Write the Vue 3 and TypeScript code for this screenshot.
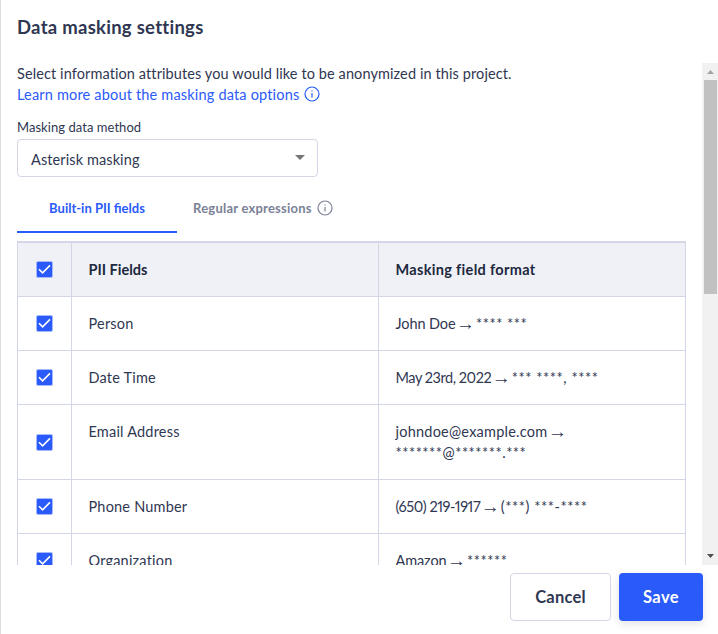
<script setup lang="ts">
import { ref } from 'vue'

interface FormatLine {
  source?: string
  mask?: string
  kind?: 'numeric' | 'email'
}

interface PiiField {
  name: string
  lines: FormatLine[]
  checked: boolean
}

const fields = ref<PiiField[]>([
  { name: 'Person', lines: [{ source: 'John Doe', mask: '**** ***' }], checked: true },
  {
    name: 'Date Time',
    lines: [{ source: 'May 23rd, 2022', mask: '*** ****, ****', kind: 'numeric' }],
    checked: true,
  },
  {
    name: 'Email Address',
    lines: [{ source: 'johndoe@example.com', kind: 'email' }, { mask: '*******@*******.***', kind: 'email' }],
    checked: true,
  },
  {
    name: 'Phone Number',
    lines: [{ source: '(650) 219-1917', mask: '(***) ***-****', kind: 'numeric' }],
    checked: true,
  },
  { name: 'Organization', lines: [{ source: 'Amazon', mask: '******' }], checked: true },
])
</script>

<template>
  <div class="dialog">
    <h1 class="title"><span>Data masking settings</span></h1>
    <div class="scroller">
      <div class="content">
        <p class="intro">Select information attributes you would like to be anonymized in this project.</p>
        <a class="learn">
          <span>Learn more about the masking data options</span>
          <svg class="info" viewBox="0 0 16 16">
            <circle cx="8" cy="8" r="7" />
            <path d="M8 7v4.5M8 4.4v1.2" />
          </svg>
        </a>
        <label class="label">Masking data method</label>
        <div class="select">
          <span>Asterisk masking</span>
          <svg class="caret" viewBox="0 0 10 5"><path d="M0 0h10L5 5z" /></svg>
        </div>
        <div class="tabs">
          <div class="tab active"><span>Built-in PII fields</span></div>
          <div class="tab second">
            <span>Regular expressions</span>
            <svg class="info" viewBox="0 0 16 16">
              <circle cx="8" cy="8" r="7" />
              <path d="M8 7v4.5M8 4.4v1.2" />
            </svg>
          </div>
        </div>
        <div class="table">
          <div class="row head">
            <div class="cell check">
              <svg class="box" viewBox="0 0 17 17">
                <rect class="edge" width="17" height="17" rx="2" />
                <rect x="1" y="1" width="15" height="15" rx="1" />
                <path d="M3 8.2l3.6 3.6 7.4-7.4" />
              </svg>
            </div>
            <div class="cell"><span class="name-title">PII Fields</span></div>
            <div class="cell"><span class="format-title">Masking field format</span></div>
          </div>
          <div v-for="field in fields" :key="field.name" class="row">
            <div class="cell check" @click="field.checked = !field.checked">
              <svg class="box" viewBox="0 0 17 17">
                <rect class="edge" width="17" height="17" rx="2" />
                <rect x="1" y="1" width="15" height="15" rx="1" />
                <path v-if="field.checked" d="M3 8.2l3.6 3.6 7.4-7.4" />
              </svg>
            </div>
            <div class="cell"><span>{{ field.name }}</span></div>
            <div class="cell">
              <div v-for="(line, i) in field.lines" :key="i" class="line" :class="line.kind">
                <template v-if="line.source">
                  <span class="source">{{ line.source }}</span>
                  <span class="arrow">→</span>
                </template>
                <span v-if="line.mask" class="mask">{{ line.mask }}</span>
              </div>
            </div>
          </div>
        </div>
      </div>
      <div class="scrollbar">
        <svg class="up" viewBox="0 0 7 4"><path d="M0 4h7L3.5 0z" /></svg>
        <div class="thumb"></div>
        <svg class="down" viewBox="0 0 7 4"><path d="M0 0h7L3.5 4z" /></svg>
      </div>
    </div>
    <div class="actions">
      <button class="cancel"><span>Cancel</span></button>
      <button class="save"><span>Save</span></button>
    </div>
  </div>
</template>

<style>
body {
  background: #fff;
  overflow: hidden;
}
</style>

<style scoped>
* {
  box-sizing: border-box;
}
.dialog {
  height: 634px;
  border-left: 1px solid #dcdcdc;
  display: flex;
  flex-direction: column;
  font: 400 14.5px/21px Lato, 'Open Sans', sans-serif;
  letter-spacing: 0.2px;
  color: #2f3752;
}
.title {
  margin: 0;
  height: 63px;
  padding: 15px 0 0 16px;
  font-size: 18.5px;
  line-height: 24px;
  font-weight: 700;
  letter-spacing: 0.27px;
}
.scroller {
  height: 502px;
  display: flex;
  overflow: hidden;
}
.content {
  width: 701px;
  flex: none;
  padding-left: 16px;
}
.intro {
  margin: 0;
  letter-spacing: 0.1px;
}
.learn {
  display: flex;
  align-items: center;
  gap: 5px;
  color: #2a5afa;
  letter-spacing: 0.18px;
}
.info {
  width: 16px;
  height: 16px;
  fill: none;
  stroke: currentColor;
  stroke-width: 1.2;
}
.learn .info {
  margin-bottom: 2px;
}
.label {
  display: block;
  margin-top: 13px;
  font-size: 13px;
  line-height: 18px;
  letter-spacing: 0.05px;
}
.select {
  margin-top: 3px;
  width: 301px;
  height: 38px;
  border: 1px solid #d2d6e6;
  border-radius: 4px;
  display: flex;
  align-items: center;
  justify-content: space-between;
  padding: 2px 12px 0 13px;
  letter-spacing: 0.1px;
}
.caret {
  width: 10px;
  height: 5px;
  margin-bottom: 4px;
  fill: #757575;
}
.tabs {
  display: flex;
  height: 56px;
  font-size: 13px;
  font-weight: 700;
  letter-spacing: 0;
  color: #7b8197;
}
.tab {
  display: flex;
  align-items: center;
  gap: 5px;
  height: 100%;
  padding: 9px 16px 0;
}
.tab.second {
  padding-bottom: 2px;
  letter-spacing: 0.22px;
}
.tab.second .info {
  margin-bottom: 1px;
}
.tab.active {
  width: 160px;
  justify-content: center;
  color: #2a5afa;
  border-bottom: 2px solid #2a5afa;
}
.table {
  margin-top: 8px;
  width: 669px;
  border: 1px solid #d2d6e6;
  border-top-width: 2px;
  border-bottom: 0;
}
.row {
  display: grid;
  grid-template-columns: 53px 307px 307px;
  border-bottom: 1px solid #d2d6e6;
}
.head {
  background: #f0f1f6;
  font-weight: 700;
  color: #20283e;
}
.name-title {
  letter-spacing: 0;
}
.format-title {
  letter-spacing: 0.32px;
}
.cell {
  padding: 16px 16px 16px 16.5px;
}
.cell + .cell {
  border-left: 1px solid #d2d6e6;
}
.cell.check {
  padding: 0;
  display: flex;
  align-items: center;
  justify-content: center;
}
.box {
  width: 17px;
  height: 17px;
}
.box rect {
  fill: #2a5afa;
}
.box .edge {
  fill: #a5b8fb;
}
.box path {
  fill: none;
  stroke: #fff;
  stroke-width: 1.6;
}
.line {
  height: 21px;
  display: flex;
  white-space: pre;
}
.source {
  font-variant-numeric: proportional-nums;
  letter-spacing: -0.1px;
}
.numeric .source {
  letter-spacing: -0.45px;
}
.email .source {
  letter-spacing: 0.23px;
}
.arrow {
  font-family: 'Liberation Sans', sans-serif;
  font-size: 19px;
  letter-spacing: 0;
  margin: 0 1px 0 0.5px;
}
.mask {
  letter-spacing: 0.55px;
}
.numeric .mask {
  letter-spacing: 0.6px;
}
.scrollbar {
  width: 16px;
  flex: none;
  background: #f1f1f1;
  display: flex;
  flex-direction: column;
  align-items: center;
}
.up,
.down {
  width: 7px;
  height: 4px;
  margin-top: 7px;
  fill: #a3a3a3;
}
.down {
  margin: auto 0 7px;
  fill: #505050;
}
.thumb {
  margin-top: 6px;
  width: 13px;
  height: 214px;
  background: #c1c1c1;
}
.actions {
  display: flex;
  justify-content: flex-end;
  gap: 8px;
  padding: 8px 15px 0 0;
}
button {
  font: 700 16.5px/24px Lato, sans-serif;
  letter-spacing: 0.2px;
  height: 48px;
  border-radius: 4px;
  padding: 0;
}
.cancel {
  width: 101px;
  background: #fff;
  color: #2f3752;
  border: 1px solid #d2d6e6;
}
.save {
  width: 84px;
  background: #2a5afa;
  color: #fff;
  border: 0;
  letter-spacing: 0.4px;
  box-shadow: 0 3px 8px rgba(30, 40, 80, 0.13);
}
</style>
